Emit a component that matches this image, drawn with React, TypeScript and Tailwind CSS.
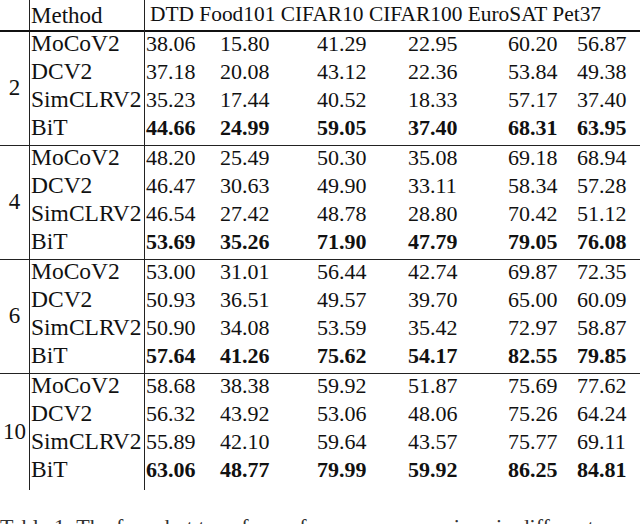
import React from "react";

type Row = { method: string; vals: string[]; bold?: boolean };

const groups: { shots: string; rows: Row[] }[] = [
  {
    shots: "2",
    rows: [
      { method: "MoCoV2", vals: ["38.06", "15.80", "41.29", "22.95", "60.20", "56.87"] },
      { method: "DCV2", vals: ["37.18", "20.08", "43.12", "22.36", "53.84", "49.38"] },
      { method: "SimCLRV2", vals: ["35.23", "17.44", "40.52", "18.33", "57.17", "37.40"] },
      { method: "BiT", vals: ["44.66", "24.99", "59.05", "37.40", "68.31", "63.95"], bold: true },
    ],
  },
  {
    shots: "4",
    rows: [
      { method: "MoCoV2", vals: ["48.20", "25.49", "50.30", "35.08", "69.18", "68.94"] },
      { method: "DCV2", vals: ["46.47", "30.63", "49.90", "33.11", "58.34", "57.28"] },
      { method: "SimCLRV2", vals: ["46.54", "27.42", "48.78", "28.80", "70.42", "51.12"] },
      { method: "BiT", vals: ["53.69", "35.26", "71.90", "47.79", "79.05", "76.08"], bold: true },
    ],
  },
  {
    shots: "6",
    rows: [
      { method: "MoCoV2", vals: ["53.00", "31.01", "56.44", "42.74", "69.87", "72.35"] },
      { method: "DCV2", vals: ["50.93", "36.51", "49.57", "39.70", "65.00", "60.09"] },
      { method: "SimCLRV2", vals: ["50.90", "34.08", "53.59", "35.42", "72.97", "58.87"] },
      { method: "BiT", vals: ["57.64", "41.26", "75.62", "54.17", "82.55", "79.85"], bold: true },
    ],
  },
  {
    shots: "10",
    rows: [
      { method: "MoCoV2", vals: ["58.68", "38.38", "59.92", "51.87", "75.69", "77.62"] },
      { method: "DCV2", vals: ["56.32", "43.92", "53.06", "48.06", "75.26", "64.24"] },
      { method: "SimCLRV2", vals: ["55.89", "42.10", "59.64", "43.57", "75.77", "69.11"] },
      { method: "BiT", vals: ["63.06", "48.77", "79.99", "59.92", "86.25", "84.81"], bold: true },
    ],
  },
];

export default function App() {
  return (
    <div className="w-[640px] h-[524px] overflow-hidden bg-white text-[#111] font-['Liberation_Serif',serif] text-[22px] leading-none">
      {/* header */}
      <div className="flex h-[30px] items-center">
        <div className="h-full w-[30px] border-r border-[#222]" />
        <div className="flex h-full w-[115px] items-center border-r border-[#222] pl-[1px] text-[23px]">
          Method
        </div>
        <div className="flex h-full items-center pl-[5px] whitespace-nowrap text-[21.4px]">
          DTD Food101 CIFAR10 CIFAR100 EuroSAT Pet37
        </div>
      </div>
      <div className="h-[2px] bg-[#111]" />

      {/* groups */}
      {groups.map((g, gi) => {
        const last = gi === groups.length - 1;
        return (
          <div
            key={g.shots}
            className={`flex ${last ? "h-[116px]" : "h-[114px] border-b border-[#222]"}`}
          >
            <div className="flex w-[30px] items-center justify-center border-r border-[#222] pb-[2px] text-[23px]">
              {g.shots}
            </div>
            <div className="-mt-[2px] grid w-[115px] grid-rows-[repeat(4,28px)] border-r border-[#222] pl-[1px] text-[23.5px]">
              {g.rows.map((r) => (
                <div key={r.method} className="flex items-center whitespace-nowrap">
                  {r.method}
                </div>
              ))}
            </div>
            <div className="-mt-[2px] grid grid-rows-[repeat(4,28px)] pl-[1px]">
              {g.rows.map((r) => (
                <div
                  key={r.method}
                  className={`grid grid-cols-[74px_97px_91px_100px_69px_60px] items-center ${
                    r.bold ? "font-bold" : ""
                  }`}
                >
                  {r.vals.map((v, i) => (
                    <span key={i}>{v}</span>
                  ))}
                </div>
              ))}
            </div>
          </div>
        );
      })}

      {/* caption, cut off by the frame */}
      <div className="mt-[26px] whitespace-nowrap text-[#333]">
        Table 1: The few-shot transfer performance comparison in different
      </div>
    </div>
  );
}
